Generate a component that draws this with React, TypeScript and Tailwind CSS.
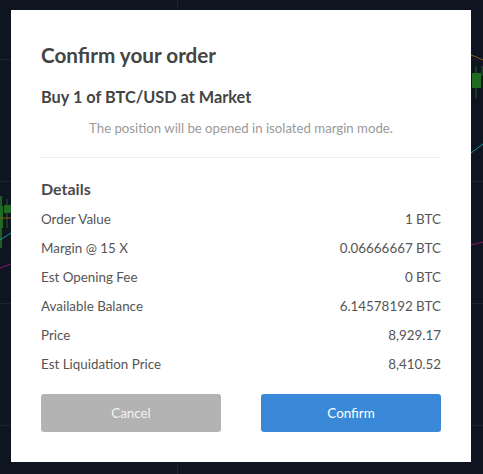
import React from "react";

const details = [
  { label: "Order Value", value: "1 BTC" },
  { label: "Margin @ 15 X", value: "0.06666667 BTC" },
  { label: "Est Opening Fee", value: "0 BTC" },
  { label: "Available Balance", value: "6.14578192 BTC" },
  { label: "Price", value: "8,929.17" },
  { label: "Est Liquidation Price", value: "8,410.52" },
];

function ChartBackdrop() {
  return (
    <svg className="absolute inset-0" width="483" height="474" viewBox="0 0 483 474">
      {/* grid */}
      <g stroke="#1a2130" strokeWidth="1">
        <line x1="0" y1="59.5" x2="483" y2="59.5" />
        <line x1="0" y1="181.5" x2="483" y2="181.5" />
        <line x1="0" y1="303.5" x2="483" y2="303.5" />
        <line x1="0" y1="425.5" x2="483" y2="425.5" />
        <line x1="177.5" y1="0" x2="177.5" y2="474" />
      </g>
      {/* left candles */}
      <line x1="1" y1="196" x2="1" y2="248" stroke="#1f5e22" strokeWidth="2" />
      <rect x="0" y="206" width="3" height="22" fill="#1f6b24" />
      <line x1="7" y1="199" x2="7" y2="228" stroke="#1f5e22" strokeWidth="1" />
      <rect x="4" y="205" width="7" height="8" fill="#1f6b24" />
      <line x1="0" y1="218" x2="11" y2="218" stroke="#8a5a16" strokeWidth="1" />
      <line x1="0" y1="240" x2="11" y2="233" stroke="#1d8f99" strokeWidth="1" />
      <line x1="0" y1="268" x2="11" y2="264" stroke="#8a1a6a" strokeWidth="1" />
      {/* right side */}
      <path d="M471 55 Q477 57 483 60" stroke="#8a5a16" strokeWidth="1" fill="none" />
      <line x1="476" y1="66" x2="476" y2="98" stroke="#1f5e22" strokeWidth="1" />
      <rect x="472" y="73" width="9" height="15" fill="#1f6b24" />
      <line x1="482" y1="66" x2="482" y2="76" stroke="#1f5e22" strokeWidth="1" />
      <line x1="471" y1="153" x2="483" y2="144" stroke="#1d8f99" strokeWidth="1" />
      <line x1="471" y1="245" x2="483" y2="242" stroke="#8a1a6a" strokeWidth="1" />
    </svg>
  );
}

export default function App() {
  return (
    <div
      className="relative w-[483px] h-[474px] overflow-hidden bg-[#0f1520]"
      style={{ fontFamily: "Lato, 'Open Sans', sans-serif" }}
    >
      <ChartBackdrop />

      <div className="absolute left-[11px] top-[10px] w-[460px] h-[452px] bg-white px-[30px] pt-[31px]">
        <h1 className="text-[20.7px] font-bold leading-[28px] text-[#444]">Confirm your order</h1>

        <h2 className="mt-[18px] text-[16.3px] font-bold leading-[20px] text-[#444]">
          Buy 1 of BTC/USD at Market
        </h2>
        <p className="mt-[12px] text-center text-[13.2px] leading-[18px] text-[#9a9a9a]">
          The position will be opened in isolated margin mode.
        </p>

        <div className="mt-[20px] border-t border-[#ececec]" />

        {/* Details */}
        <h3 className="mt-[21px] text-[16px] font-bold leading-[20px] text-[#4a4a4a]">Details</h3>
        <div className="mt-[6px] flex flex-col">
          {details.map((row) => (
            <div
              key={row.label}
              className="flex h-[29px] items-center justify-between text-[13.4px] text-[#555]"
            >
              <span>{row.label}</span>
              <span>{row.value}</span>
            </div>
          ))}
        </div>

        <div className="mt-[15px] flex gap-[40px]">
          <button className="h-[38px] flex-1 rounded-[3px] bg-[#b3b3b3] text-[13.4px] text-[#f2f2f2]">
            Cancel
          </button>
          <button className="h-[38px] flex-1 rounded-[3px] bg-[#3a89d8] text-[13.4px] text-white">
            Confirm
          </button>
        </div>
      </div>
    </div>
  );
}
